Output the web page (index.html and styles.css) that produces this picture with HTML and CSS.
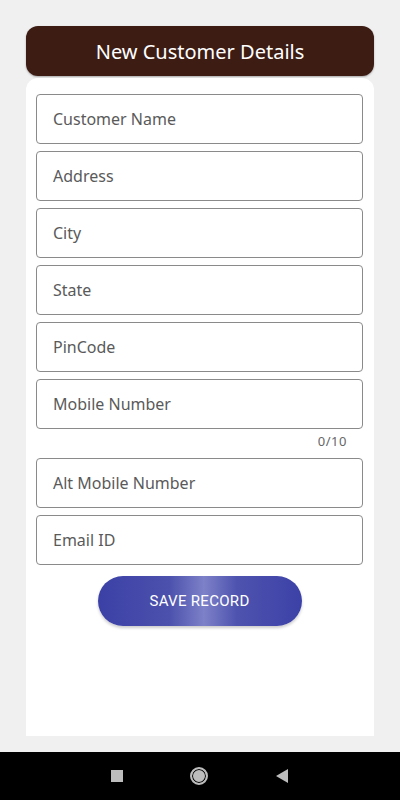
FILE: index.html
```html
<!DOCTYPE html>
<html lang="en">
<head>
    <meta charset="UTF-8">
    <meta name="viewport" content="width=device-width, initial-scale=1.0">
    <title>New Customer Details</title>
    <link rel="stylesheet" href="styles.css">
</head>
<body>
<div class="screen">
    <main class="content">
        <div class="title-bar">New Customer Details</div>

        <form class="card">
            <input class="field" type="text" placeholder="Customer Name">
            <input class="field" type="text" placeholder="Address">
            <input class="field" type="text" placeholder="City">
            <input class="field" type="text" placeholder="State">
            <input class="field" type="text" placeholder="PinCode">
            <div class="field-group">
                <input class="field" type="text" placeholder="Mobile Number">
                <span class="counter">0/10</span>
            </div>
            <input class="field" type="text" placeholder="Alt Mobile Number">
            <input class="field" type="text" placeholder="Email ID">

            <button class="save-btn" type="button">SAVE RECORD</button>
        </form>
    </main>

    <nav class="nav-bar">
        <span class="nav-square"></span>
        <span class="nav-circle"></span>
        <svg class="nav-back" width="14" height="16" viewBox="0 0 14 16">
            <polygon points="13,1 13,15 1,8" fill="#bdbdbd"></polygon>
        </svg>
    </nav>
</div>
</body>
</html>
```

FILE: styles.css
```css
body {
    margin: 0;
    padding: 0;
    background-color: #f0f0f0;
    font-family: 'Noto Sans', 'Open Sans', sans-serif;
}

.screen {
    width: 400px;
    height: 800px;
    display: flex;
    flex-direction: column;
}

.content {
    flex: 1;
    padding: 26px 26px 16px;
    display: flex;
    flex-direction: column;
}

.title-bar {
    height: 50px;
    background-color: #3d1c14;
    border-radius: 12px;
    color: #fff;
    font-size: 20px;
    display: flex;
    align-items: center;
    justify-content: center;
    box-shadow: 0 1px 2px rgba(0, 0, 0, 0.3);
}

.card {
    flex: 1;
    margin-top: 2px;
    background-color: #fff;
    border-radius: 12px 12px 0 0;
    padding: 16px 11px 0 10px;
    display: flex;
    flex-direction: column;
    gap: 7px;
}

.field {
    box-sizing: border-box;
    width: 100%;
    height: 50px;
    margin: 0;
    padding: 0 16px;
    border: 1px solid #8a8a8a;
    border-radius: 4px;
    font-family: inherit;
    font-size: 16px;
    color: #333;
    background: #fff;
}

.field::placeholder {
    color: #5a5a5a;
}

.field-group {
    display: flex;
    flex-direction: column;
}

.counter {
    align-self: flex-end;
    margin: 3px 16px 0 0;
    height: 19px;
    font-size: 13px;
    color: #666;
    letter-spacing: 0.5px;
}

.save-btn {
    align-self: center;
    width: 204px;
    height: 50px;
    margin-top: 4px;
    border: none;
    border-radius: 25px;
    background: linear-gradient(90deg, #3b40a6 0%, #4c51ad 35%, #7d81c8 52%, #4e53af 68%, #3c41a7 100%);
    color: #fff;
    font-family: 'Roboto', sans-serif;
    font-size: 15px;
    letter-spacing: 0.3px;
    box-shadow: 0 2px 3px rgba(0, 0, 0, 0.2);
}

.nav-bar {
    height: 48px;
    background-color: #000;
    display: flex;
    align-items: center;
    justify-content: center;
    gap: 67px;
}

.nav-square {
    width: 12px;
    height: 12px;
    background-color: #bdbdbd;
}

.nav-circle {
    box-sizing: border-box;
    width: 18px;
    height: 18px;
    border-radius: 50%;
    border: 2px solid #bdbdbd;
    background-color: #bdbdbd;
    box-shadow: inset 0 0 0 1px #000;
}
```
